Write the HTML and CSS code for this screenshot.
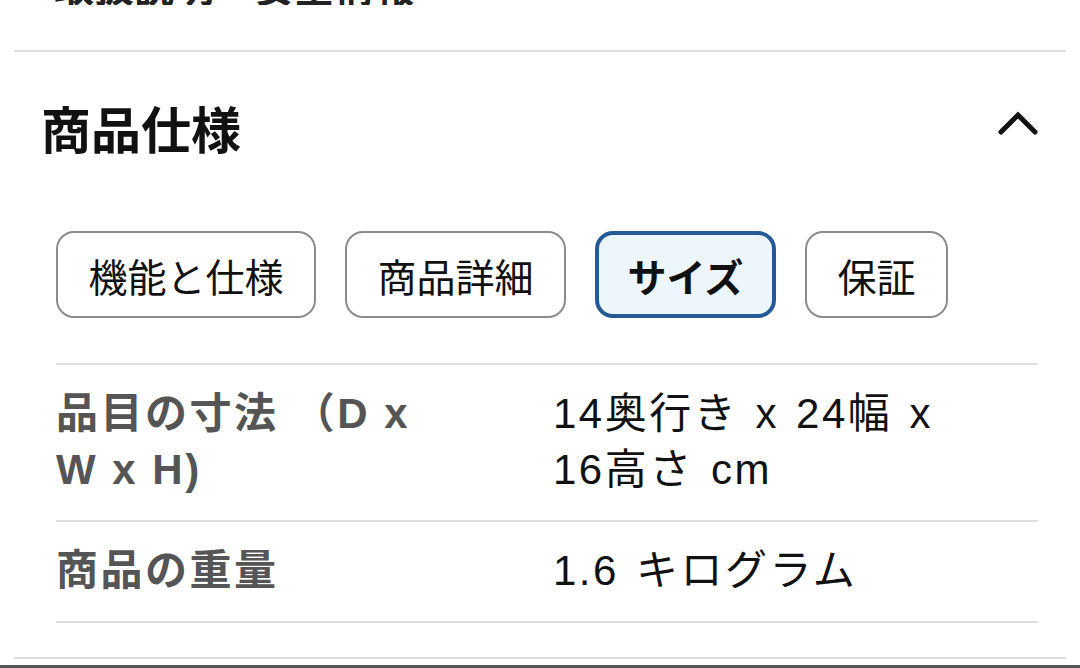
FILE: index.html
```html
<!DOCTYPE html>
<html lang="ja">
<head>
<meta charset="utf-8">
<title>商品仕様</title>
<link rel="stylesheet" href="styles.css">
</head>
<body>
<div class="page">
  <div class="prev">
    <span class="prev-text">取扱説明　安全情報</span>
  </div>
  <hr class="rule">
  <section class="spec">
    <div class="spec-head">
      <h2 class="spec-title">商品仕様</h2>
      <svg class="chevron" viewBox="0 0 40 24" width="40" height="24" aria-hidden="true">
        <polyline points="3,21 20,4 37,21" fill="none" stroke="#111" stroke-width="5" stroke-linecap="round" stroke-linejoin="miter"/>
      </svg>
    </div>
    <div class="spec-body">
      <div class="tabs">
        <button class="tab">機能と仕様</button>
        <button class="tab">商品詳細</button>
        <button class="tab tab-active">サイズ</button>
        <button class="tab">保証</button>
      </div>
      <div class="table">
        <div class="row">
          <div class="label">品目の寸法 （D x W x H)</div>
          <div class="value">14奥行き x 24幅 x 16高さ cm</div>
        </div>
        <div class="row">
          <div class="label">商品の重量</div>
          <div class="value">1.6 キログラム</div>
        </div>
      </div>
    </div>
  </section>
  <hr class="rule rule-bottom">
</div>
<div class="navbar"></div>
</body>
</html>
```
FILE: styles.css
```css
* { box-sizing: border-box; }
html, body { margin: 0; padding: 0; background: #fff; }
body {
  font-family: "Liberation Sans", "Noto Sans CJK JP", sans-serif;
  color: #111;
  width: 1080px;
  height: 668px;
  overflow: hidden;
  display: flex;
  flex-direction: column;
}
.page {
  padding: 0 14px;
  flex: 1;
}
.prev {
  height: 5px;
  overflow: hidden;
  display: flex;
  align-items: flex-end;
  padding-left: 40px;
}
.prev-text {
  font-family: "Noto Sans CJK JP", sans-serif;
  font-weight: 700;
  font-size: 40px;
  line-height: 40px;
  color: #222;
  white-space: nowrap;
}
.rule {
  border: 0;
  height: 2px;
  background: #dedede;
  margin: 45px 0 0;
}
.rule-bottom { margin-top: 34px; }
.spec-head {
  display: flex;
  align-items: center;
  justify-content: space-between;
  padding: 45px 28px 0 27px;
}
.spec-title {
  margin: 0;
  font-family: "Noto Sans CJK JP", sans-serif;
  font-weight: 700;
  font-size: 50px;
  line-height: 60px;
  color: #111;
}
.chevron { display: block; margin-top: -8px; }
.spec-body { padding: 0 28px 0 42px; }
.tabs {
  display: flex;
  gap: 29px;
  margin-top: 74px;
  padding-bottom: 45px;
  border-bottom: 2px solid #dedede;
}
.tab {
  font-family: "Noto Sans CJK JP", sans-serif;
  font-size: 39px;
  line-height: 50px;
  color: #111;
  background: #fff;
  border: 2px solid #8c8c8c;
  border-radius: 18px;
  height: 87px;
  padding: 0 30.5px;
  font-weight: 400;
}
.tab-active {
  border: 4px solid #245b97;
  background: #edf5fd;
  font-weight: 700;
  padding: 0 28.5px;
}
.row {
  display: grid;
  grid-template-columns: 390px 420px;
  column-gap: 107px;
  padding: 21px 0 22px;
  border-bottom: 2px solid #dedede;
  font-size: 42px;
  line-height: 56px;
  letter-spacing: 2.5px;
}
.label {
  font-family: "Liberation Sans", "Noto Sans CJK JP", sans-serif;
  font-weight: 700;
  color: #555;
}
.value {
  font-family: "Liberation Sans", "Noto Sans CJK JP", sans-serif;
  color: #111;
  word-spacing: 3px;
}
.navbar {
  height: 3px;
  background: #555;
}
```
